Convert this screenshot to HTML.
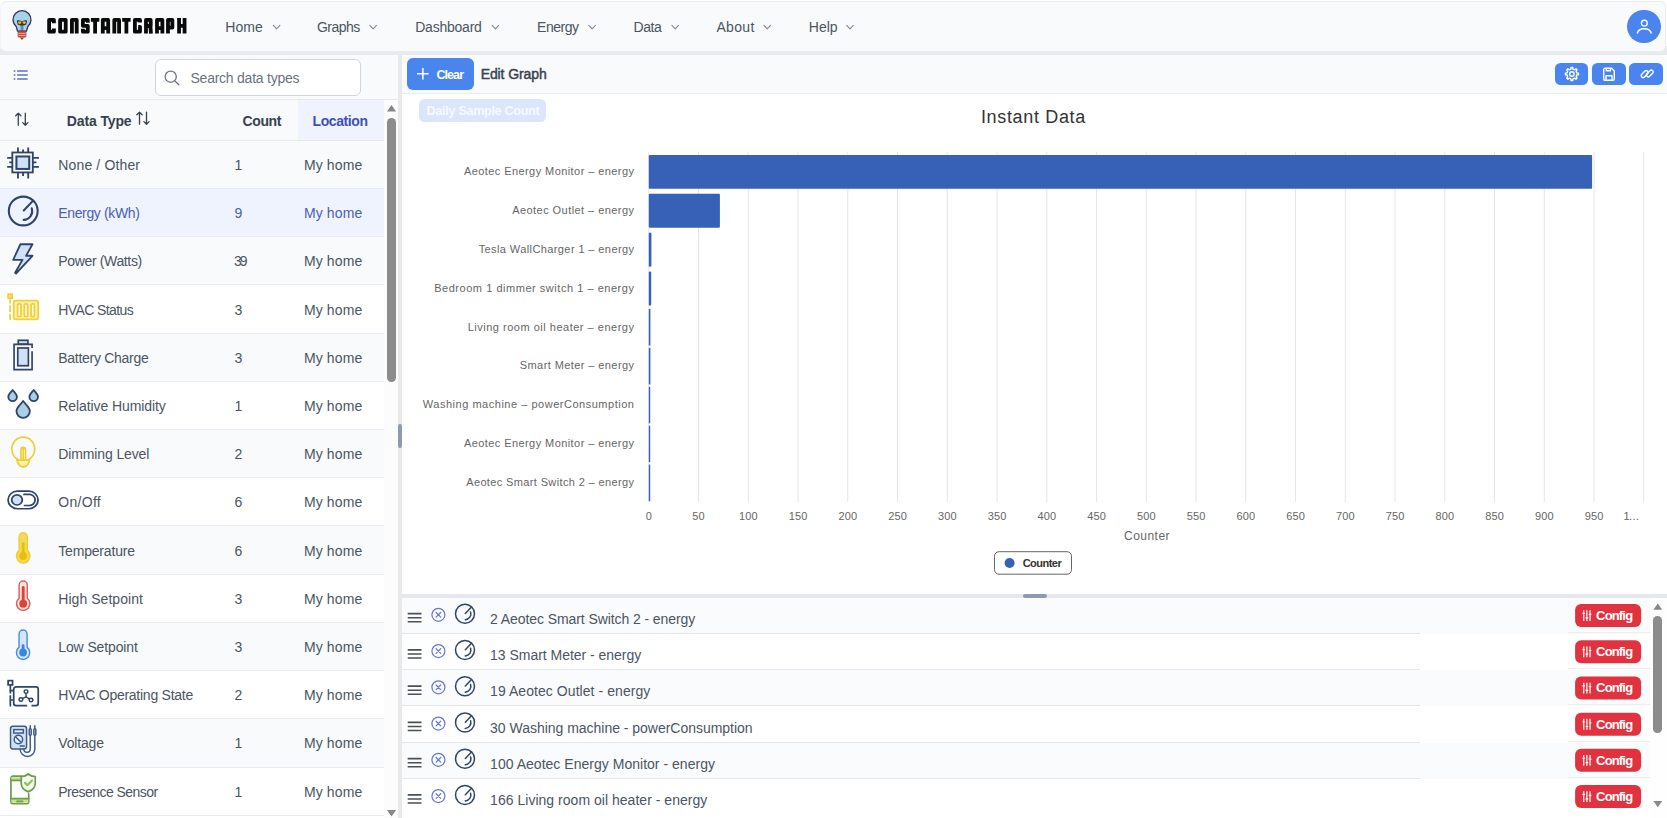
<!DOCTYPE html>
<html><head><meta charset="utf-8"><title>ConstantGraph</title>
<style>
*{box-sizing:border-box;margin:0;padding:0}
html,body{width:1667px;height:818px;overflow:hidden;background:#fff;font-family:"Liberation Sans",sans-serif;color:#4b5563}
.b{position:absolute}
.t{position:absolute;white-space:nowrap;line-height:20px;height:20px}
svg{display:block;overflow:visible;position:absolute}
.b>svg{position:static}
text{font-family:"Liberation Sans",sans-serif}
</style></head><body>

<div class="b" style="left:0px;top:0px;width:1667.00px;height:1.00px;background:#fff;"></div>
<div class="b" style="left:0px;top:46px;width:1667.00px;height:9.00px;background:#e9eaed;"></div>
<div class="b" style="left:0px;top:1px;width:1666.00px;height:51.00px;background:#f9fafb;border:1px solid #ebecef;border-left-color:#f3f4f6;border-radius:6px"></div>
<svg style="left:0;top:0" width="45" height="45" viewBox="0 0 45 45">
<path d="M17.600 31.200L16.200 26.500A9 9 0 1 1 27.800 26.500L26.400 31.200Z" fill="#a6d3ec" stroke="#3a3254" stroke-width="1.300" stroke-linejoin="round"/>
<path d="M16.800 20.400Q19.500 19.600 22 21.500Q24.500 19.600 27.200 20.400L26.300 24.600Q24 26 22 25.700Q20 26 17.700 24.600Z" fill="#4a3020"/>
<ellipse cx="19.700" cy="22.600" rx="1.600" ry="1.300" fill="#dcc22a"/><ellipse cx="24.300" cy="22.600" rx="1.600" ry="1.300" fill="#dcc22a"/>
<path d="M21.200 25.700V31M22.800 25.700V31" stroke="#3f5f90" stroke-width="0.900"/>
<path d="M17.600 31.200H26.400V36A1.500 1.500 0 0 1 24.900 37.500H19.100A1.500 1.500 0 0 1 17.600 36Z" fill="#c4503c"/>
<path d="M17.600 31.300H26.400" stroke="#8a3a30" stroke-width="0.800"/>
<path d="M18.300 33.400H25.700M18.300 35.500H25.700" stroke="#f2aaa2" stroke-width="0.900"/>
<path d="M19.800 37.400H24.200L22 40Z" fill="#a8402e"/>
</svg>
<svg style="left:0;top:18.200px;overflow:hidden" width="200" height="15.600" viewBox="0 0 200 15.600" fill="none" stroke="#0a0a0a" stroke-width="3.800" stroke-linejoin="round">
<path transform="translate(47.2,0)" d="M6.700 5.200V1.900H1.900V13.700H6.700V10.400"/>
<path transform="translate(58.2,0)" d="M1.900 1.900H7.500V13.700H1.900Z"/>
<path transform="translate(70.0,0)" d="M1.900 15.600V1.900H6.700V15.600"/>
<path transform="translate(81.0,0)" d="M6.800 4.800V1.900H1.900V7.800H6.800V13.700H1.900V10.800"/>
<path transform="translate(90.9,0)" d="M0 1.900H8.400M4.200 1.900V15.600"/>
<path transform="translate(100.9,0)" d="M1.900 15.600V1.900H7.300V15.600M1.900 10.200H7.300"/>
<path transform="translate(112.4,0)" d="M1.900 15.600V1.900H6.700V15.600"/>
<path transform="translate(122.2,0)" d="M0 1.900H8.400M4.200 1.900V15.600"/>
<path transform="translate(133.0,0)" d="M7 4.600V1.900H1.900V13.700H7V8.800H5.200"/>
<path transform="translate(144.1,0)" d="M1.900 15.600V1.900H6.600V8H1.900M6.300 8L6.900 15.600"/>
<path transform="translate(155.1,0)" d="M1.900 15.600V1.900H7.300V15.600M1.900 10.200H7.300"/>
<path transform="translate(166.1,0)" d="M1.900 15.600V1.900H6.300V9.600H1.900"/>
<path transform="translate(177.2,0)" d="M1.900 0V15.600M7.400 0V15.600M1.900 7.800H7.400"/>
</svg>
<div class="t" style="left:225.20px;top:17px;font-size:14px;letter-spacing:0.117px;color:#4b5563;">Home</div>
<svg style="left:0;top:0;transform:translate(272.7px,24.800px)" width="7.800" height="4.600" viewBox="0 0 7.800 4.600" fill="none" stroke="#7f8898" stroke-width="1.100" stroke-linecap="round" stroke-linejoin="round"><path d="M0.600 0.600L3.900 4L7.200 0.600"/></svg>
<div class="t" style="left:316.90px;top:17px;font-size:14px;letter-spacing:-0.500px;color:#4b5563;">Graphs</div>
<svg style="left:0;top:0;transform:translate(369.2px,24.800px)" width="7.800" height="4.600" viewBox="0 0 7.800 4.600" fill="none" stroke="#7f8898" stroke-width="1.100" stroke-linecap="round" stroke-linejoin="round"><path d="M0.600 0.600L3.900 4L7.200 0.600"/></svg>
<div class="t" style="left:415.20px;top:17px;font-size:14px;letter-spacing:-0.225px;color:#4b5563;">Dashboard</div>
<svg style="left:0;top:0;transform:translate(491.5px,24.800px)" width="7.800" height="4.600" viewBox="0 0 7.800 4.600" fill="none" stroke="#7f8898" stroke-width="1.100" stroke-linecap="round" stroke-linejoin="round"><path d="M0.600 0.600L3.900 4L7.200 0.600"/></svg>
<div class="t" style="left:537.10px;top:17px;font-size:14px;letter-spacing:-0.470px;color:#4b5563;">Energy</div>
<svg style="left:0;top:0;transform:translate(588.2px,24.800px)" width="7.800" height="4.600" viewBox="0 0 7.800 4.600" fill="none" stroke="#7f8898" stroke-width="1.100" stroke-linecap="round" stroke-linejoin="round"><path d="M0.600 0.600L3.900 4L7.200 0.600"/></svg>
<div class="t" style="left:633.60px;top:17px;font-size:14px;letter-spacing:-0.500px;color:#4b5563;">Data</div>
<svg style="left:0;top:0;transform:translate(671.3px,24.800px)" width="7.800" height="4.600" viewBox="0 0 7.800 4.600" fill="none" stroke="#7f8898" stroke-width="1.100" stroke-linecap="round" stroke-linejoin="round"><path d="M0.600 0.600L3.900 4L7.200 0.600"/></svg>
<div class="t" style="left:716.40px;top:17px;font-size:14px;letter-spacing:0.325px;color:#4b5563;">About</div>
<svg style="left:0;top:0;transform:translate(763.3px,24.800px)" width="7.800" height="4.600" viewBox="0 0 7.800 4.600" fill="none" stroke="#7f8898" stroke-width="1.100" stroke-linecap="round" stroke-linejoin="round"><path d="M0.600 0.600L3.900 4L7.200 0.600"/></svg>
<div class="t" style="left:808.80px;top:17px;font-size:14px;letter-spacing:0.000px;color:#4b5563;">Help</div>
<svg style="left:0;top:0;transform:translate(846.1px,24.800px)" width="7.800" height="4.600" viewBox="0 0 7.800 4.600" fill="none" stroke="#7f8898" stroke-width="1.100" stroke-linecap="round" stroke-linejoin="round"><path d="M0.600 0.600L3.900 4L7.200 0.600"/></svg>
<div class="b" style="left:1627.2px;top:9.7px;width:33.60px;height:33.60px;background:#4a84ee;border-radius:17px"></div>
<svg style="left:0;top:0;transform:translate(1636.300px,18px)" width="16" height="16" viewBox="0 0 16 16" fill="none" stroke="#fff" stroke-width="1.400" stroke-linecap="round"><circle cx="8" cy="5.200" r="2.900"/><path d="M1.100 15A7 5.200 0 0 1 14.900 15"/></svg>
<div class="b" style="left:0px;top:55px;width:398.00px;height:763.00px;background:#fff;"></div>
<div class="b" style="left:0px;top:55px;width:398.00px;height:44.50px;background:#f9fafb;border-bottom:1px solid #e5e7eb"></div>
<svg style="left:0;top:0;transform:translate(13.500px,70px)" width="14.200" height="10" viewBox="0 0 14.200 10" fill="none" stroke="#5b6fd0" stroke-width="1.500"><path d="M3.600 0.900H14.200M3.600 4.900H14.200M3.600 8.900H14.200M0.200 0.900H1.900M0.200 4.900H1.900M0.200 8.900H1.900"/></svg>
<div class="b" style="left:155px;top:58.5px;width:206.00px;height:37.00px;background:#fff;border:1px solid #d1d5db;border-radius:6px"></div>
<svg style="left:0;top:0;transform:translate(164px,70px)" width="16" height="16" viewBox="0 0 16 16" fill="none" stroke="#6b7280" stroke-width="1.300" stroke-linecap="round"><circle cx="6.700" cy="6.700" r="5.600"/><path d="M10.900 10.900L14.800 14.800"/></svg>
<div class="t" style="left:190.50px;top:68px;font-size:14px;letter-spacing:-0.241px;color:#6b7280;">Search data types</div>
<div class="b" style="left:0px;top:99.5px;width:384.00px;height:41.50px;background:#f9fafb;border-bottom:1px solid #e5e7eb"></div>
<div class="b" style="left:298px;top:99.5px;width:86.00px;height:40.50px;background:#eff3fe;"></div>
<svg style="left:0;top:0;transform:translate(15px,112.2px)" width="14" height="14" viewBox="0 0 14 14" fill="none" stroke="#374151" stroke-width="1.300" stroke-linecap="round" stroke-linejoin="round"><path d="M3.300 13V1M0.700 3.600L3.300 1L5.900 3.600M10.300 1V13M7.700 10.400L10.300 13L12.900 10.400"/></svg>
<div class="t" style="left:66.80px;top:111px;font-size:14px;font-weight:bold;letter-spacing:-0.131px;color:#374151;">Data Type</div>
<svg style="left:0;top:0;transform:translate(136.2px,111.2px)" width="14" height="14" viewBox="0 0 14 14" fill="none" stroke="#374151" stroke-width="1.300" stroke-linecap="round" stroke-linejoin="round"><path d="M3.300 13V1M0.700 3.600L3.300 1L5.900 3.600M10.300 1V13M7.700 10.400L10.300 13L12.900 10.400"/></svg>
<div class="t" style="left:242.50px;top:111px;font-size:14px;font-weight:bold;letter-spacing:-0.363px;color:#374151;">Count</div>
<div class="t" style="left:312.50px;top:111px;font-size:14px;font-weight:bold;letter-spacing:-0.407px;color:#3f51b5;">Location</div>
<div class="b" style="left:0px;top:141px;width:384.00px;height:48.00px;background:#f9fafb;border-bottom:1px solid #e8ebf0"></div>
<div class="b" style="left:0;top:0;transform-origin:0 0;transform:translate(6.69px,147.00px) scale(1.0242,0.9968)"><svg width="32" height="32" viewBox="0 0 32 32" fill="none" stroke="#2f4468" stroke-width="1.8" stroke-linecap="butt">
<rect x="5.5" y="5.5" width="20" height="20"/>
<rect x="9.5" y="9.5" width="12.5" height="12.5" fill="#cfe0f7" stroke-width="2"/>
<path d="M11 0.5V5.5M21 0.5V5.5M16 2.5V5.5M0.5 11H5.5M0.5 20H5.5M2.5 15.5H5.5M25.5 11H31.5M25.5 20H31.5M25.5 15.5H29M11 25.5V31.5M21 25.5V31.5M16 25.5V29"/>
</svg></div>
<div class="t" style="left:58.30px;top:155px;font-size:14px;letter-spacing:0.141px;color:#4b5563;">None / Other</div>
<div class="t" style="left:234.40px;top:155px;font-size:14px;letter-spacing:-1.800px;color:#4b5563;">1</div>
<div class="t" style="left:303.90px;top:155px;font-size:14px;letter-spacing:0.125px;color:#4b5563;">My home</div>
<div class="b" style="left:0px;top:189px;width:384.00px;height:48.00px;background:#eff3fe;border-bottom:1px solid #e8ebf0"></div>
<div class="b" style="left:0;top:0;transform-origin:0 0;transform:translate(7.45px,195.25px) scale(0.9873,0.9841)"><svg width="32" height="32" viewBox="0 0 32 32" fill="none" stroke="#2f4468" stroke-width="2.1" stroke-linecap="round">
<circle cx="16" cy="16" r="14.6"/>
<path d="M16.5 15.5L26 5.5"/>
<path d="M24.6 13.2A9 9 0 0 1 16.4 25"/>
</svg></div>
<div class="t" style="left:58.30px;top:203px;font-size:14px;letter-spacing:-0.368px;color:#4b5fb5;">Energy (kWh)</div>
<div class="t" style="left:234.40px;top:203px;font-size:14px;letter-spacing:-1.800px;color:#4b5fb5;">9</div>
<div class="t" style="left:303.90px;top:203px;font-size:14px;letter-spacing:0.125px;color:#4b5fb5;">My home</div>
<div class="b" style="left:0px;top:237px;width:384.00px;height:48.00px;background:#f9fafb;border-bottom:1px solid #e8ebf0"></div>
<div class="b" style="left:0;top:0;transform-origin:0 0;transform:translate(7.89px,243.05px) scale(0.9467,0.9890)"><svg width="32" height="32" viewBox="0 0 32 32" fill="#cfe0f7" stroke="#2f4468" stroke-width="1.9" stroke-linejoin="round">
<path d="M13.2 1.2H26L19.2 12.900H26L8.600 30.800L7.600 30L15.400 17H5.600Z"/>
</svg></div>
<div class="t" style="left:58.30px;top:251px;font-size:14px;letter-spacing:-0.354px;color:#4b5563;">Power (Watts)</div>
<div class="t" style="left:234.00px;top:251px;font-size:14px;letter-spacing:-1.950px;color:#4b5563;">39</div>
<div class="t" style="left:303.90px;top:251px;font-size:14px;letter-spacing:0.125px;color:#4b5563;">My home</div>
<div class="b" style="left:0px;top:285px;width:384.00px;height:49.00px;background:#fff;border-bottom:1px solid #e8ebf0"></div>
<div class="b" style="left:0;top:0;transform-origin:0 0;transform:translate(6.96px,292.99px) scale(0.9624,0.9443)"><svg width="34" height="32" viewBox="0 0 34 32" fill="none" stroke="#f0cf3a" stroke-width="1.8">
<rect x="1.2" y="1.2" width="4.2" height="4.2" fill="#f7e070"/>
<path d="M3.3 5.5V11M3.3 13V20M3.3 22V28.5"/>
<rect x="7" y="8" width="25.5" height="20" rx="2.5" fill="#fdf3b0"/>
<rect x="11" y="11.5" width="3.6" height="13.5" rx="1.2" fill="#fffbe0"/>
<rect x="18" y="11.5" width="3.6" height="13.5" rx="1.2" fill="#fffbe0"/>
<rect x="25" y="11.5" width="3.6" height="13.5" rx="1.2" fill="#fffbe0"/>
</svg></div>
<div class="t" style="left:58.30px;top:300px;font-size:14px;letter-spacing:-0.595px;color:#4b5563;">HVAC Status</div>
<div class="t" style="left:234.40px;top:300px;font-size:14px;letter-spacing:-1.800px;color:#4b5563;">3</div>
<div class="t" style="left:303.90px;top:300px;font-size:14px;letter-spacing:0.125px;color:#4b5563;">My home</div>
<div class="b" style="left:0px;top:334px;width:384.00px;height:48.00px;background:#f9fafb;border-bottom:1px solid #e8ebf0"></div>
<div class="b" style="left:0;top:0;transform-origin:0 0;transform:translate(8.07px,338.89px) scale(0.9233,0.9585)"><svg width="32" height="34" viewBox="0 0 32 34" fill="none" stroke="#2f4468" stroke-width="1.8">
<rect x="11" y="1.5" width="10.5" height="4" fill="#cfe0f7"/>
<path d="M26 9.5V5.8H6.5V32H26V13"/>
<rect x="10.5" y="9.5" width="11.5" height="18.5" fill="#cfe0f7"/>
</svg></div>
<div class="t" style="left:58.30px;top:348px;font-size:14px;letter-spacing:-0.288px;color:#4b5563;">Battery Charge</div>
<div class="t" style="left:234.40px;top:348px;font-size:14px;letter-spacing:-1.800px;color:#4b5563;">3</div>
<div class="t" style="left:303.90px;top:348px;font-size:14px;letter-spacing:0.125px;color:#4b5563;">My home</div>
<div class="b" style="left:0px;top:382px;width:384.00px;height:48.00px;background:#fff;border-bottom:1px solid #e8ebf0"></div>
<div class="b" style="left:0;top:0;transform-origin:0 0;transform:translate(6.87px,388.53px) scale(0.9576,0.9597)"><svg width="34" height="32" viewBox="0 0 34 32" fill="#a9cfe4" stroke="#2f4468" stroke-width="1.9" stroke-linejoin="round">
<path d="M6 1.5C8 4 10.5 6 10.5 8.6A4.5 4.5 0 0 1 1.5 8.6C1.5 6 4 4 6 1.5Z"/>
<path d="M28 1.5C30 4 32.5 6 32.5 8.6A4.5 4.5 0 0 1 23.500 8.6C23.5 6 26 4 28 1.5Z"/>
<path d="M17 13C19.500 16.500 24 19.500 24 23.500A7 7 0 0 1 10 23.500C10 19.500 14.500 16.500 17 13Z"/>
</svg></div>
<div class="t" style="left:58.30px;top:396px;font-size:14px;letter-spacing:-0.094px;color:#4b5563;">Relative Humidity</div>
<div class="t" style="left:234.40px;top:396px;font-size:14px;letter-spacing:-1.800px;color:#4b5563;">1</div>
<div class="t" style="left:303.90px;top:396px;font-size:14px;letter-spacing:0.125px;color:#4b5563;">My home</div>
<div class="b" style="left:0px;top:430px;width:384.00px;height:48.00px;background:#f9fafb;border-bottom:1px solid #e8ebf0"></div>
<div class="b" style="left:0;top:0;transform-origin:0 0;transform:translate(8.55px,436.06px) scale(0.9185,0.9591)"><svg width="32" height="34" viewBox="0 0 32 34" fill="none" stroke="#f3cc2f" stroke-width="1.8" stroke-linecap="round" stroke-linejoin="round">
<path d="M10 24.500C5 21.500 3.500 17.500 3.500 13.500A12.500 12.500 0 0 1 28.500 13.500C28.500 17.500 27 21.500 22 24.500"/>
<path d="M9 25H23L21 29.500C19 33 13 33 11 29.500Z" fill="#fdf3b0"/>
<path d="M13.500 25V14.500C13.500 11 18.500 11 18.500 14.500V25M16 11.500V25" />
</svg></div>
<div class="t" style="left:58.30px;top:444px;font-size:14px;letter-spacing:-0.125px;color:#4b5563;">Dimming Level</div>
<div class="t" style="left:234.40px;top:444px;font-size:14px;letter-spacing:-1.800px;color:#4b5563;">2</div>
<div class="t" style="left:303.90px;top:444px;font-size:14px;letter-spacing:0.125px;color:#4b5563;">My home</div>
<div class="b" style="left:0px;top:478px;width:384.00px;height:48.00px;background:#fff;border-bottom:1px solid #e8ebf0"></div>
<div class="b" style="left:0;top:0;transform-origin:0 0;transform:translate(6.96px,490.08px) scale(0.9478,0.8977)"><svg width="34" height="22" viewBox="0 0 34 22" fill="none" stroke="#2f4468" stroke-width="1.9" stroke-linecap="round">
<rect x="1.200" y="1.200" width="31.600" height="19.600" rx="9.800"/>
<path d="M18 4.800H23.500A6.200 6.200 0 0 1 23.500 17.200H18.500"/>
<circle cx="10.600" cy="11" r="5.600" fill="#cfe0f7"/>
</svg></div>
<div class="t" style="left:58.30px;top:492px;font-size:14px;letter-spacing:0.290px;color:#4b5563;">On/Off</div>
<div class="t" style="left:234.40px;top:492px;font-size:14px;letter-spacing:-1.800px;color:#4b5563;">6</div>
<div class="t" style="left:303.90px;top:492px;font-size:14px;letter-spacing:0.125px;color:#4b5563;">My home</div>
<div class="b" style="left:0px;top:526px;width:384.00px;height:49.00px;background:#f9fafb;border-bottom:1px solid #e8ebf0"></div>
<div class="b" style="left:0;top:0;transform-origin:0 0;transform:translate(15.02px,531.86px) scale(0.9091,0.9448)"><svg width="18" height="34" viewBox="0 0 18 34" fill="none">
<path d="M4.500 5.500A4.500 4.500 0 0 1 13.500 5.500V19.600A7.400 7.400 0 1 1 4.500 19.600Z" fill="#f5d958" stroke="#f3cc2f" stroke-width="1.600"/>
<path d="M9 12.5V25" stroke="#e8bf10" stroke-width="3.200" stroke-linecap="round"/>
<circle cx="9" cy="25.500" r="4.300" fill="#e8bf10"/>
</svg></div>
<div class="t" style="left:58.30px;top:541px;font-size:14px;letter-spacing:-0.190px;color:#4b5563;">Temperature</div>
<div class="t" style="left:234.40px;top:541px;font-size:14px;letter-spacing:-1.800px;color:#4b5563;">6</div>
<div class="t" style="left:303.90px;top:541px;font-size:14px;letter-spacing:0.125px;color:#4b5563;">My home</div>
<div class="b" style="left:0px;top:575px;width:384.00px;height:48.00px;background:#fff;border-bottom:1px solid #e8ebf0"></div>
<div class="b" style="left:0;top:0;transform-origin:0 0;transform:translate(15.02px,580.13px) scale(0.9091,0.9230)"><svg width="18" height="34" viewBox="0 0 18 34" fill="none">
<path d="M4.500 5.500A4.500 4.500 0 0 1 13.500 5.500V19.600A7.400 7.400 0 1 1 4.500 19.600Z" fill="#fbe5e3" stroke="#dd5f5a" stroke-width="1.600"/>
<path d="M9 8V25" stroke="#dc4437" stroke-width="3.200" stroke-linecap="round"/>
<circle cx="9" cy="25.500" r="4.300" fill="#dc4437"/>
</svg></div>
<div class="t" style="left:58.30px;top:589px;font-size:14px;letter-spacing:0.046px;color:#4b5563;">High Setpoint</div>
<div class="t" style="left:234.40px;top:589px;font-size:14px;letter-spacing:-1.800px;color:#4b5563;">3</div>
<div class="t" style="left:303.90px;top:589px;font-size:14px;letter-spacing:0.125px;color:#4b5563;">My home</div>
<div class="b" style="left:0px;top:623px;width:384.00px;height:48.00px;background:#f9fafb;border-bottom:1px solid #e8ebf0"></div>
<div class="b" style="left:0;top:0;transform-origin:0 0;transform:translate(15.03px,629.02px) scale(0.8939,0.9244)"><svg width="18" height="34" viewBox="0 0 18 34" fill="none">
<path d="M4.500 5.500A4.500 4.500 0 0 1 13.500 5.500V19.600A7.400 7.400 0 1 1 4.500 19.600Z" fill="#d5e6fa" stroke="#4a8fe0" stroke-width="1.600"/>
<path d="M9 18V25" stroke="#3b86e0" stroke-width="3.200" stroke-linecap="round"/>
<circle cx="9" cy="25.500" r="4.300" fill="#3b86e0"/>
</svg></div>
<div class="t" style="left:58.30px;top:637px;font-size:14px;letter-spacing:-0.123px;color:#4b5563;">Low Setpoint</div>
<div class="t" style="left:234.40px;top:637px;font-size:14px;letter-spacing:-1.800px;color:#4b5563;">3</div>
<div class="t" style="left:303.90px;top:637px;font-size:14px;letter-spacing:0.125px;color:#4b5563;">My home</div>
<div class="b" style="left:0px;top:671px;width:384.00px;height:48.00px;background:#fff;border-bottom:1px solid #e8ebf0"></div>
<div class="b" style="left:0;top:0;transform-origin:0 0;transform:translate(6.96px,679.50px) scale(0.9624,0.9322)"><svg width="34" height="30" viewBox="0 0 34 30" fill="none" stroke="#2f4468" stroke-width="1.8">
<rect x="1.200" y="1.200" width="4.600" height="4.600"/>
<path d="M3.500 6V15M3.500 17V29"/>
<path d="M21 28H9.500A2.500 2.500 0 0 1 7 25.500V10.500A2.500 2.500 0 0 1 9.500 8H30A2.500 2.500 0 0 1 32.500 10.500V25.500A2.500 2.500 0 0 1 30 28H25.500M3.500 12H7M3.500 22H7"/>
<circle cx="19.800" cy="13" r="1.900" stroke-width="1.500"/>
<circle cx="14.500" cy="21.500" r="1.900" stroke-width="1.500"/>
<circle cx="25" cy="22" r="1.900" stroke-width="1.500"/>
<path d="M19.800 15V18.500L16 20.500M19.800 18.500L23.500 21" stroke-width="1.500"/>
</svg></div>
<div class="t" style="left:58.30px;top:685px;font-size:14px;letter-spacing:-0.258px;color:#4b5563;">HVAC Operating State</div>
<div class="t" style="left:234.40px;top:685px;font-size:14px;letter-spacing:-1.800px;color:#4b5563;">2</div>
<div class="t" style="left:303.90px;top:685px;font-size:14px;letter-spacing:0.125px;color:#4b5563;">My home</div>
<div class="b" style="left:0px;top:719px;width:384.00px;height:49.00px;background:#f9fafb;border-bottom:1px solid #e8ebf0"></div>
<div class="b" style="left:0;top:0;transform-origin:0 0;transform:translate(9.60px,724.92px) scale(0.9169,0.9418)"><svg width="30" height="34" viewBox="0 0 30 34" fill="none" stroke="#3d5a8a" stroke-width="1.600" stroke-linecap="round">
<rect x="1" y="1.500" width="17.500" height="24" rx="2.500" fill="#cfe2f9"/>
<rect x="4.500" y="5" width="10.500" height="3.600" fill="#e8f1fc"/>
<circle cx="9.600" cy="15.500" r="4.600" fill="#e8f1fc"/>
<path d="M6.500 12.500L12.800 18.600"/>
<path d="M11.500 22.500H16M11.500 25.500A8 8 0 0 0 27.500 25.500V11M15.500 25.500A3.500 3.500 0 0 0 22.500 25.500V11" />
<path d="M22.500 1V4M27.500 1V4" />
<rect x="21.400" y="4" width="2.200" height="7" rx="1" fill="#cfe2f9"/>
<rect x="26.400" y="4" width="2.200" height="7" rx="1" fill="#cfe2f9"/>
</svg></div>
<div class="t" style="left:58.30px;top:733px;font-size:14px;letter-spacing:-0.167px;color:#4b5563;">Voltage</div>
<div class="t" style="left:234.40px;top:733px;font-size:14px;letter-spacing:-1.800px;color:#4b5563;">1</div>
<div class="t" style="left:303.90px;top:733px;font-size:14px;letter-spacing:0.125px;color:#4b5563;">My home</div>
<div class="b" style="left:0px;top:768px;width:384.00px;height:48.00px;background:#fff;border-bottom:1px solid #e8ebf0"></div>
<div class="b" style="left:0;top:0;transform-origin:0 0;transform:translate(9.53px,772.87px) scale(0.9357,0.9504)"><svg width="30" height="34" viewBox="0 0 30 34" fill="none" stroke="#6f9a52" stroke-width="1.800" stroke-linejoin="round" stroke-linecap="round">
<path d="M13 3.500H3.500A2 2 0 0 0 1.500 5.500V30.500A2 2 0 0 0 3.500 32.500H18.500A2 2 0 0 0 20.500 30.500V22" fill="#fbfdf8"/>
<path d="M2 4.500H12.500V8H2Z" fill="#c9e48a" stroke="none"/>
<path d="M2 27.500H20V31.500H2Z" fill="#c9e48a" stroke="none"/>
<path d="M1.500 8H12.500M1.500 27H20.500M8 30H14" />
<path d="M20 1.200C22 3 24.500 3.800 27.500 3.800V11C27.500 15.500 24 18.500 20 20C16 18.500 12.500 15.500 12.500 11V3.800C15.500 3.800 18 3 20 1.200Z" fill="#f4f9ea"/>
<path d="M16.500 10.500L19 13L24 8" stroke="#8bbf5a" stroke-width="2.200"/>
</svg></div>
<div class="t" style="left:58.30px;top:782px;font-size:14px;letter-spacing:-0.536px;color:#4b5563;">Presence Sensor</div>
<div class="t" style="left:234.40px;top:782px;font-size:14px;letter-spacing:-1.800px;color:#4b5563;">1</div>
<div class="t" style="left:303.90px;top:782px;font-size:14px;letter-spacing:0.125px;color:#4b5563;">My home</div>
<div class="b" style="left:384px;top:99.5px;width:14.00px;height:718.50px;background:#fcfcfd;"></div>
<svg style="left:0;top:0;transform:translate(386.700px,104.700px)" width="9.600" height="7.100" viewBox="0 0 10 7"><path d="M0.200 6.900L5 0.100L9.800 6.900Z" fill="#878787"/></svg>
<div class="b" style="left:387.2px;top:117.8px;width:8.80px;height:264.00px;background:#8c8c8c;border-radius:4.400px"></div>
<svg style="left:0;top:0;transform:translate(386.700px,809.700px)" width="9.600" height="7.100" viewBox="0 0 10 7"><path d="M0.200 0.100L5 6.900L9.800 0.100Z" fill="#878787"/></svg>
<div class="b" style="left:398px;top:55px;width:4.00px;height:763.00px;background:#e9e9eb;"></div>
<div class="b" style="left:398px;top:424px;width:4.00px;height:23.50px;background:#8f9aab;border-radius:2px"></div>
<div class="b" style="left:402px;top:55px;width:1265.00px;height:763.00px;background:#fff;border-radius:6px 6px 0 0"></div>
<div class="b" style="left:402px;top:55px;width:1265.00px;height:38.50px;background:#f9fafb;border-bottom:1px solid #e8ebf0;border-radius:6px 6px 0 0"></div>
<div class="b" style="left:407.1px;top:58.3px;width:66.50px;height:31.70px;background:#4a84ee;border-radius:6px"></div>
<svg style="left:0;top:0;transform:translate(417px,67.900px)" width="11.800" height="11.800" viewBox="0 0 11.800 11.800" stroke="#fff" stroke-width="1.500" stroke-linecap="round"><path d="M5.900 0.700V11.100M0.700 5.900H11.100"/></svg>
<div class="t" style="left:436.40px;top:65px;font-size:12.5px;font-weight:bold;letter-spacing:-0.912px;color:#fff;">Clear</div>
<div class="t" style="left:480.70px;top:64px;font-size:14px;-webkit-text-stroke:0.450px #374151;letter-spacing:-0.100px;color:#374151;">Edit Graph</div>
<div class="b" style="left:1555px;top:63px;width:32.90px;height:22.00px;background:#4a84ee;border-radius:5.500px"></div>
<div class="b" style="left:1592px;top:63px;width:33.80px;height:22.00px;background:#4a84ee;border-radius:5.500px"></div>
<div class="b" style="left:1628.9px;top:63px;width:34.10px;height:22.00px;background:#4a84ee;border-radius:5.500px"></div>
<svg style="left:0;top:0;transform:translate(1571.900px,74px)" width="1" height="1" viewBox="0 0 1 1" fill="none" stroke="#fff" stroke-width="1.400" stroke-linejoin="round"><path d="M-1.05 -4.89L-0.83 -6.55L0.83 -6.55L1.05 -4.89L2.71 -4.20L4.05 -5.22L5.22 -4.05L4.20 -2.71L4.89 -1.05L6.55 -0.83L6.55 0.83L4.89 1.05L4.20 2.71L5.22 4.05L4.05 5.22L2.71 4.20L1.05 4.89L0.83 6.55L-0.83 6.55L-1.05 4.89L-2.71 4.20L-4.05 5.22L-5.22 4.05L-4.20 2.71L-4.89 1.05L-6.55 0.83L-6.55 -0.83L-4.89 -1.05L-4.20 -2.71L-5.22 -4.05L-4.05 -5.22L-2.71 -4.20Z"/><circle cx="0" cy="0" r="2.200"/></svg>
<svg style="left:0;top:0;transform:translate(1603px,67.500px)" width="12" height="13.500" viewBox="0 0 12 13.500" fill="none" stroke="#fff" stroke-width="1.400" stroke-linejoin="round"><path d="M0.700 2A1.300 1.300 0 0 1 2 0.700H8.600L11.300 3.400V11.500A1.300 1.300 0 0 1 10 12.800H2A1.300 1.300 0 0 1 0.700 11.500Z"/><path d="M3.300 0.700V3.300H7.400V0.700M3 12.800V8.300H9V12.800"/></svg>
<svg style="left:0;top:0;transform:translate(1647.200px,73.800px)" width="1" height="1" viewBox="0 0 1 1" fill="none" stroke="#fff" stroke-width="1.400"><g transform="translate(-2.600 0.300) rotate(-45)"><rect x="-4" y="-1.900" width="8" height="3.800" rx="1.900"/></g><g transform="translate(2.600 -0.300) rotate(-45)"><rect x="-4" y="-1.900" width="8" height="3.800" rx="1.900"/></g></svg>
<div class="b" style="left:419px;top:99.2px;width:126.90px;height:22.40px;background:#dbe6fb;border-radius:5.500px"></div>
<div class="t" style="left:426.60px;top:101px;font-size:12.5px;font-weight:bold;letter-spacing:-0.259px;color:#f6f9ff;">Daily Sample Count</div>
<svg style="left:0;top:0;transform:translate(403px,95px)" width="1264" height="498" viewBox="403 95 1264 498">
<path d="M648.80 152V502" stroke="#e6e6e6" stroke-width="1"/>
<path d="M698.55 152V502" stroke="#e6e6e6" stroke-width="1"/>
<path d="M748.30 152V502" stroke="#e6e6e6" stroke-width="1"/>
<path d="M798.05 152V502" stroke="#e6e6e6" stroke-width="1"/>
<path d="M847.80 152V502" stroke="#e6e6e6" stroke-width="1"/>
<path d="M897.55 152V502" stroke="#e6e6e6" stroke-width="1"/>
<path d="M947.30 152V502" stroke="#e6e6e6" stroke-width="1"/>
<path d="M997.05 152V502" stroke="#e6e6e6" stroke-width="1"/>
<path d="M1046.80 152V502" stroke="#e6e6e6" stroke-width="1"/>
<path d="M1096.55 152V502" stroke="#e6e6e6" stroke-width="1"/>
<path d="M1146.30 152V502" stroke="#e6e6e6" stroke-width="1"/>
<path d="M1196.05 152V502" stroke="#e6e6e6" stroke-width="1"/>
<path d="M1245.80 152V502" stroke="#e6e6e6" stroke-width="1"/>
<path d="M1295.55 152V502" stroke="#e6e6e6" stroke-width="1"/>
<path d="M1345.30 152V502" stroke="#e6e6e6" stroke-width="1"/>
<path d="M1395.05 152V502" stroke="#e6e6e6" stroke-width="1"/>
<path d="M1444.80 152V502" stroke="#e6e6e6" stroke-width="1"/>
<path d="M1494.55 152V502" stroke="#e6e6e6" stroke-width="1"/>
<path d="M1544.30 152V502" stroke="#e6e6e6" stroke-width="1"/>
<path d="M1594.05 152V502" stroke="#e6e6e6" stroke-width="1"/>
<path d="M1643.80 152V502" stroke="#e6e6e6" stroke-width="1"/>
<rect x="648.8" y="154.95" width="943.3" height="33.8" rx="0.8" fill="#3661b7"/>
<rect x="648.8" y="193.85" width="71.1" height="33.8" rx="0.8" fill="#3661b7"/>
<rect x="648.8" y="232.75" width="2.6" height="33.8" rx="0" fill="#3661b7"/>
<rect x="648.8" y="271.65" width="2.4" height="33.8" rx="0" fill="#3661b7"/>
<rect x="648.8" y="308.95" width="1.6" height="36.6" rx="0" fill="#3661b7"/>
<rect x="648.8" y="347.85" width="1.6" height="36.6" rx="0" fill="#3661b7"/>
<rect x="648.8" y="386.75" width="1.4" height="36.6" rx="0" fill="#3661b7"/>
<rect x="648.8" y="425.65" width="1.4" height="36.6" rx="0" fill="#3661b7"/>
<rect x="648.8" y="464.55" width="1.4" height="36.6" rx="0" fill="#3661b7"/>
<rect x="994.500" y="551.700" width="77" height="22.500" rx="4.500" fill="#fff" stroke="#666" stroke-width="1"/>
<circle cx="1009.600" cy="563" r="5" fill="#3661b7"/>
</svg>
<div class="t" style="left:980.90px;top:107px;font-size:18px;letter-spacing:0.664px;color:#333;">Instant Data</div>
<div class="t" style="left:463.90px;top:161px;font-size:11px;letter-spacing:0.426px;color:#666;">Aeotec Energy Monitor – energy</div>
<div class="t" style="left:512.20px;top:200px;font-size:11px;letter-spacing:0.443px;color:#666;">Aeotec Outlet – energy</div>
<div class="t" style="left:478.70px;top:239px;font-size:11px;letter-spacing:0.400px;color:#666;">Tesla WallCharger 1 – energy</div>
<div class="t" style="left:434.20px;top:278px;font-size:11px;letter-spacing:0.533px;color:#666;">Bedroom 1 dimmer switch 1 – energy</div>
<div class="t" style="left:467.70px;top:317px;font-size:11px;letter-spacing:0.508px;color:#666;">Living room oil heater – energy</div>
<div class="t" style="left:519.80px;top:355px;font-size:11px;letter-spacing:0.411px;color:#666;">Smart Meter – energy</div>
<div class="t" style="left:422.80px;top:394px;font-size:11px;letter-spacing:0.520px;color:#666;">Washing machine – powerConsumption</div>
<div class="t" style="left:463.90px;top:433px;font-size:11px;letter-spacing:0.426px;color:#666;">Aeotec Energy Monitor – energy</div>
<div class="t" style="left:466.20px;top:472px;font-size:11px;letter-spacing:0.367px;color:#666;">Aeotec Smart Switch 2 – energy</div>
<div class="t" style="left:645.80px;top:506px;font-size:11px;letter-spacing:-0.100px;color:#666;">0</div>
<div class="t" style="left:692.35px;top:506px;font-size:11px;letter-spacing:0.150px;color:#666;">50</div>
<div class="t" style="left:738.90px;top:506px;font-size:11px;letter-spacing:0.225px;color:#666;">100</div>
<div class="t" style="left:788.65px;top:506px;font-size:11px;letter-spacing:0.225px;color:#666;">150</div>
<div class="t" style="left:838.40px;top:506px;font-size:11px;letter-spacing:0.225px;color:#666;">200</div>
<div class="t" style="left:888.15px;top:506px;font-size:11px;letter-spacing:0.225px;color:#666;">250</div>
<div class="t" style="left:937.90px;top:506px;font-size:11px;letter-spacing:0.225px;color:#666;">300</div>
<div class="t" style="left:987.65px;top:506px;font-size:11px;letter-spacing:0.225px;color:#666;">350</div>
<div class="t" style="left:1037.40px;top:506px;font-size:11px;letter-spacing:0.225px;color:#666;">400</div>
<div class="t" style="left:1087.15px;top:506px;font-size:11px;letter-spacing:0.225px;color:#666;">450</div>
<div class="t" style="left:1136.90px;top:506px;font-size:11px;letter-spacing:0.225px;color:#666;">500</div>
<div class="t" style="left:1186.65px;top:506px;font-size:11px;letter-spacing:0.225px;color:#666;">550</div>
<div class="t" style="left:1236.40px;top:506px;font-size:11px;letter-spacing:0.225px;color:#666;">600</div>
<div class="t" style="left:1286.15px;top:506px;font-size:11px;letter-spacing:0.225px;color:#666;">650</div>
<div class="t" style="left:1335.90px;top:506px;font-size:11px;letter-spacing:0.225px;color:#666;">700</div>
<div class="t" style="left:1385.65px;top:506px;font-size:11px;letter-spacing:0.225px;color:#666;">750</div>
<div class="t" style="left:1435.40px;top:506px;font-size:11px;letter-spacing:0.225px;color:#666;">800</div>
<div class="t" style="left:1485.15px;top:506px;font-size:11px;letter-spacing:0.225px;color:#666;">850</div>
<div class="t" style="left:1534.90px;top:506px;font-size:11px;letter-spacing:0.225px;color:#666;">900</div>
<div class="t" style="left:1584.65px;top:506px;font-size:11px;letter-spacing:0.225px;color:#666;">950</div>
<div class="t" style="left:1623.50px;top:506px;font-size:11px;letter-spacing:-1.100px;color:#666;">1…</div>
<div class="t" style="left:1124.00px;top:526px;font-size:12px;letter-spacing:0.483px;color:#666;">Counter</div>
<div class="t" style="left:1022.70px;top:553px;font-size:11px;font-weight:bold;letter-spacing:-0.525px;color:#333;">Counter</div>
<div class="b" style="left:402px;top:597px;width:1248.00px;height:37.00px;background:#fafbfc;"></div>
<div class="b" style="left:402px;top:633px;width:1018.00px;height:1.00px;background:#e4e7ec;"></div>
<div class="b" style="left:1568px;top:632px;width:82.00px;height:1.00px;background:#ecedf0;"></div>
<svg style="left:0;top:0;transform:translate(407.700px,612.70px)" width="13.800" height="10" viewBox="0 0 13.800 10" stroke="#4a4f58" stroke-width="1.600"><path d="M0 0.900H13.800M0 5H13.800M0 9.100H13.800"/></svg>
<svg style="left:0;top:0;transform:translate(430.900px,607.30px)" width="15" height="15" viewBox="0 0 15 15" fill="none" stroke="#6676d2" stroke-width="1.200" stroke-linecap="round"><circle cx="7.500" cy="7.500" r="6.500"/><path d="M5.200 5.200L9.800 9.800M9.800 5.200L5.200 9.800"/></svg>
<div class="b" style="left:0;top:0;transform:translate(454.600px,603.40px)"><svg width="20.8" height="20.8" viewBox="0 0 32 32" fill="none" stroke="#2f4468" stroke-width="2.3" stroke-linecap="round">
<circle cx="16" cy="16" r="14.6"/>
<path d="M16.5 15.5L26 5.5"/>
<path d="M24.6 13.2A9 9 0 0 1 16.4 25"/>
</svg></div>
<div class="t" style="left:490.10px;top:609px;font-size:14px;letter-spacing:-0.085px;color:#4b5563;">2 Aeotec Smart Switch 2 - energy</div>
<div class="b" style="left:0;top:0;width:65.700px;height:22.600px;transform:translate(1575.100px,604.10px);background:#e1333f;border-radius:6px"></div>
<svg style="left:0;top:0;transform:translate(1582.300px,610.30px)" width="9.200" height="10.800" viewBox="0 0 10 12" stroke="#fff" stroke-width="1.300" fill="none"><path d="M1.500 0V12M5 0V12M8.500 0V12M0 3.500H3M3.500 8.500H6.500M7 4.500H10"/></svg>
<div class="t" style="left:1596.10px;top:606px;font-size:13px;font-weight:bold;letter-spacing:-0.830px;color:#fff;">Config</div>
<div class="b" style="left:402px;top:634px;width:1248.00px;height:36.00px;background:#fff;"></div>
<div class="b" style="left:402px;top:669px;width:1018.00px;height:1.00px;background:#e4e7ec;"></div>
<div class="b" style="left:1568px;top:668px;width:82.00px;height:1.00px;background:#ecedf0;"></div>
<svg style="left:0;top:0;transform:translate(407.700px,648.95px)" width="13.800" height="10" viewBox="0 0 13.800 10" stroke="#4a4f58" stroke-width="1.600"><path d="M0 0.900H13.800M0 5H13.800M0 9.100H13.800"/></svg>
<svg style="left:0;top:0;transform:translate(430.900px,643.55px)" width="15" height="15" viewBox="0 0 15 15" fill="none" stroke="#6676d2" stroke-width="1.200" stroke-linecap="round"><circle cx="7.500" cy="7.500" r="6.500"/><path d="M5.200 5.200L9.800 9.800M9.800 5.200L5.200 9.800"/></svg>
<div class="b" style="left:0;top:0;transform:translate(454.600px,639.65px)"><svg width="20.8" height="20.8" viewBox="0 0 32 32" fill="none" stroke="#2f4468" stroke-width="2.3" stroke-linecap="round">
<circle cx="16" cy="16" r="14.6"/>
<path d="M16.5 15.5L26 5.5"/>
<path d="M24.6 13.2A9 9 0 0 1 16.4 25"/>
</svg></div>
<div class="t" style="left:490.10px;top:645px;font-size:14px;letter-spacing:-0.030px;color:#4b5563;">13 Smart Meter - energy</div>
<div class="b" style="left:0;top:0;width:65.700px;height:22.600px;transform:translate(1575.100px,640.29px);background:#e1333f;border-radius:6px"></div>
<svg style="left:0;top:0;transform:translate(1582.300px,646.49px)" width="9.200" height="10.800" viewBox="0 0 10 12" stroke="#fff" stroke-width="1.300" fill="none"><path d="M1.500 0V12M5 0V12M8.500 0V12M0 3.500H3M3.500 8.500H6.500M7 4.500H10"/></svg>
<div class="t" style="left:1596.10px;top:642px;font-size:13px;font-weight:bold;letter-spacing:-0.830px;color:#fff;">Config</div>
<div class="b" style="left:402px;top:670px;width:1248.00px;height:36.00px;background:#fafbfc;"></div>
<div class="b" style="left:402px;top:705px;width:1018.00px;height:1.00px;background:#e4e7ec;"></div>
<div class="b" style="left:1568px;top:704px;width:82.00px;height:1.00px;background:#ecedf0;"></div>
<svg style="left:0;top:0;transform:translate(407.700px,685.20px)" width="13.800" height="10" viewBox="0 0 13.800 10" stroke="#4a4f58" stroke-width="1.600"><path d="M0 0.900H13.800M0 5H13.800M0 9.100H13.800"/></svg>
<svg style="left:0;top:0;transform:translate(430.900px,679.80px)" width="15" height="15" viewBox="0 0 15 15" fill="none" stroke="#6676d2" stroke-width="1.200" stroke-linecap="round"><circle cx="7.500" cy="7.500" r="6.500"/><path d="M5.200 5.200L9.800 9.800M9.800 5.200L5.200 9.800"/></svg>
<div class="b" style="left:0;top:0;transform:translate(454.600px,675.90px)"><svg width="20.8" height="20.8" viewBox="0 0 32 32" fill="none" stroke="#2f4468" stroke-width="2.3" stroke-linecap="round">
<circle cx="16" cy="16" r="14.6"/>
<path d="M16.5 15.5L26 5.5"/>
<path d="M24.6 13.2A9 9 0 0 1 16.4 25"/>
</svg></div>
<div class="t" style="left:490.10px;top:681px;font-size:14px;letter-spacing:0.060px;color:#4b5563;">19 Aeotec Outlet - energy</div>
<div class="b" style="left:0;top:0;width:65.700px;height:22.600px;transform:translate(1575.100px,676.48px);background:#e1333f;border-radius:6px"></div>
<svg style="left:0;top:0;transform:translate(1582.300px,682.68px)" width="9.200" height="10.800" viewBox="0 0 10 12" stroke="#fff" stroke-width="1.300" fill="none"><path d="M1.500 0V12M5 0V12M8.500 0V12M0 3.500H3M3.500 8.500H6.500M7 4.500H10"/></svg>
<div class="t" style="left:1596.10px;top:678px;font-size:13px;font-weight:bold;letter-spacing:-0.830px;color:#fff;">Config</div>
<div class="b" style="left:402px;top:706px;width:1248.00px;height:37.00px;background:#fff;"></div>
<div class="b" style="left:402px;top:742px;width:1018.00px;height:1.00px;background:#e4e7ec;"></div>
<div class="b" style="left:1568px;top:741px;width:82.00px;height:1.00px;background:#ecedf0;"></div>
<svg style="left:0;top:0;transform:translate(407.700px,721.45px)" width="13.800" height="10" viewBox="0 0 13.800 10" stroke="#4a4f58" stroke-width="1.600"><path d="M0 0.900H13.800M0 5H13.800M0 9.100H13.800"/></svg>
<svg style="left:0;top:0;transform:translate(430.900px,716.05px)" width="15" height="15" viewBox="0 0 15 15" fill="none" stroke="#6676d2" stroke-width="1.200" stroke-linecap="round"><circle cx="7.500" cy="7.500" r="6.500"/><path d="M5.200 5.200L9.800 9.800M9.800 5.200L5.200 9.800"/></svg>
<div class="b" style="left:0;top:0;transform:translate(454.600px,712.15px)"><svg width="20.8" height="20.8" viewBox="0 0 32 32" fill="none" stroke="#2f4468" stroke-width="2.3" stroke-linecap="round">
<circle cx="16" cy="16" r="14.6"/>
<path d="M16.5 15.5L26 5.5"/>
<path d="M24.6 13.2A9 9 0 0 1 16.4 25"/>
</svg></div>
<div class="t" style="left:490.10px;top:718px;font-size:14px;letter-spacing:-0.022px;color:#4b5563;">30 Washing machine - powerConsumption</div>
<div class="b" style="left:0;top:0;width:65.700px;height:22.600px;transform:translate(1575.100px,712.67px);background:#e1333f;border-radius:6px"></div>
<svg style="left:0;top:0;transform:translate(1582.300px,718.87px)" width="9.200" height="10.800" viewBox="0 0 10 12" stroke="#fff" stroke-width="1.300" fill="none"><path d="M1.500 0V12M5 0V12M8.500 0V12M0 3.500H3M3.500 8.500H6.500M7 4.500H10"/></svg>
<div class="t" style="left:1596.10px;top:715px;font-size:13px;font-weight:bold;letter-spacing:-0.830px;color:#fff;">Config</div>
<div class="b" style="left:402px;top:743px;width:1248.00px;height:36.00px;background:#fafbfc;"></div>
<div class="b" style="left:402px;top:778px;width:1018.00px;height:1.00px;background:#e4e7ec;"></div>
<div class="b" style="left:1568px;top:777px;width:82.00px;height:1.00px;background:#ecedf0;"></div>
<svg style="left:0;top:0;transform:translate(407.700px,757.70px)" width="13.800" height="10" viewBox="0 0 13.800 10" stroke="#4a4f58" stroke-width="1.600"><path d="M0 0.900H13.800M0 5H13.800M0 9.100H13.800"/></svg>
<svg style="left:0;top:0;transform:translate(430.900px,752.30px)" width="15" height="15" viewBox="0 0 15 15" fill="none" stroke="#6676d2" stroke-width="1.200" stroke-linecap="round"><circle cx="7.500" cy="7.500" r="6.500"/><path d="M5.200 5.200L9.800 9.800M9.800 5.200L5.200 9.800"/></svg>
<div class="b" style="left:0;top:0;transform:translate(454.600px,748.40px)"><svg width="20.8" height="20.8" viewBox="0 0 32 32" fill="none" stroke="#2f4468" stroke-width="2.3" stroke-linecap="round">
<circle cx="16" cy="16" r="14.6"/>
<path d="M16.5 15.5L26 5.5"/>
<path d="M24.6 13.2A9 9 0 0 1 16.4 25"/>
</svg></div>
<div class="t" style="left:490.10px;top:754px;font-size:14px;letter-spacing:0.023px;color:#4b5563;">100 Aeotec Energy Monitor - energy</div>
<div class="b" style="left:0;top:0;width:65.700px;height:22.600px;transform:translate(1575.100px,748.86px);background:#e1333f;border-radius:6px"></div>
<svg style="left:0;top:0;transform:translate(1582.300px,755.06px)" width="9.200" height="10.800" viewBox="0 0 10 12" stroke="#fff" stroke-width="1.300" fill="none"><path d="M1.500 0V12M5 0V12M8.500 0V12M0 3.500H3M3.500 8.500H6.500M7 4.500H10"/></svg>
<div class="t" style="left:1596.10px;top:751px;font-size:13px;font-weight:bold;letter-spacing:-0.830px;color:#fff;">Config</div>
<div class="b" style="left:402px;top:779px;width:1248.00px;height:39.00px;background:#fff;"></div>
<svg style="left:0;top:0;transform:translate(407.700px,793.95px)" width="13.800" height="10" viewBox="0 0 13.800 10" stroke="#4a4f58" stroke-width="1.600"><path d="M0 0.900H13.800M0 5H13.800M0 9.100H13.800"/></svg>
<svg style="left:0;top:0;transform:translate(430.900px,788.55px)" width="15" height="15" viewBox="0 0 15 15" fill="none" stroke="#6676d2" stroke-width="1.200" stroke-linecap="round"><circle cx="7.500" cy="7.500" r="6.500"/><path d="M5.200 5.200L9.800 9.800M9.800 5.200L5.200 9.800"/></svg>
<div class="b" style="left:0;top:0;transform:translate(454.600px,784.65px)"><svg width="20.8" height="20.8" viewBox="0 0 32 32" fill="none" stroke="#2f4468" stroke-width="2.3" stroke-linecap="round">
<circle cx="16" cy="16" r="14.6"/>
<path d="M16.5 15.5L26 5.5"/>
<path d="M24.6 13.2A9 9 0 0 1 16.4 25"/>
</svg></div>
<div class="t" style="left:490.10px;top:790px;font-size:14px;letter-spacing:0.025px;color:#4b5563;">166 Living room oil heater - energy</div>
<div class="b" style="left:0;top:0;width:65.700px;height:22.600px;transform:translate(1575.100px,785.05px);background:#e1333f;border-radius:6px"></div>
<svg style="left:0;top:0;transform:translate(1582.300px,791.25px)" width="9.200" height="10.800" viewBox="0 0 10 12" stroke="#fff" stroke-width="1.300" fill="none"><path d="M1.500 0V12M5 0V12M8.500 0V12M0 3.500H3M3.500 8.500H6.500M7 4.500H10"/></svg>
<div class="t" style="left:1596.10px;top:787px;font-size:13px;font-weight:bold;letter-spacing:-0.830px;color:#fff;">Config</div>
<div class="b" style="left:1650px;top:597.6px;width:17.00px;height:220.40px;background:#fefefe;"></div>
<svg style="left:0;top:0;transform:translate(1653.200px,603.100px)" width="9.200" height="6.900" viewBox="0 0 10 7"><path d="M0.200 6.900L5 0.100L9.800 6.900Z" fill="#878787"/></svg>
<div class="b" style="left:1653.2px;top:615.8px;width:8.60px;height:117.40px;background:#8c8c8c;border-radius:4.300px"></div>
<svg style="left:0;top:0;transform:translate(1653.200px,800.800px)" width="9.200" height="6.900" viewBox="0 0 10 7"><path d="M0.200 0.100L5 6.900L9.800 0.100Z" fill="#878787"/></svg>
<div class="b" style="left:402px;top:594px;width:1265.00px;height:4.00px;background:#e6e8f1;"></div>
<div class="b" style="left:1023px;top:594px;width:24.00px;height:4.00px;background:#8f9aab;border-radius:2px"></div>
</body></html>
